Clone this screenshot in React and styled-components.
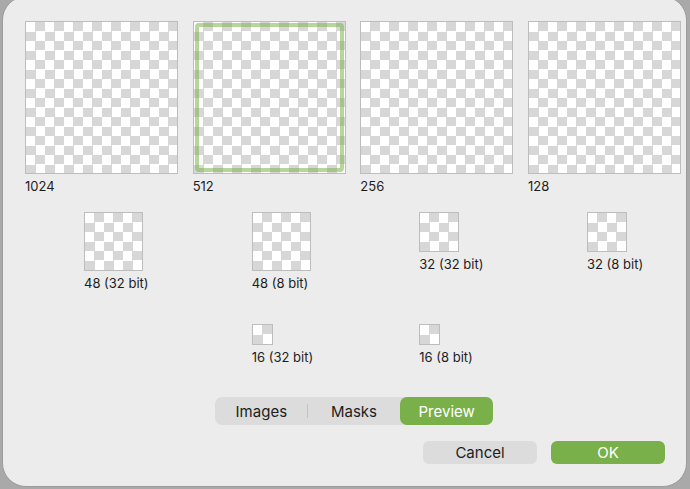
import React from 'react';
import styled, { createGlobalStyle } from 'styled-components';

const GlobalStyle = createGlobalStyle`
  html, body {
    margin: 0;
    padding: 0;
    background: #a9a9a9;
    overflow: hidden;
  }
  body {
    font-family: Inter, "Liberation Sans", sans-serif;
    -webkit-font-smoothing: antialiased;
  }
`;

const Backdrop = styled.div`
  width: 690px;
  height: 489px;
  padding: 0 3px 2px 2px;
  box-sizing: border-box;
  overflow: hidden;
`;

const Dialog = styled.div`
  margin-top: -4px;
  height: 491px;
  box-sizing: border-box;
  background: #ececec;
  border: 1px solid #9c9c9c;
  border-radius: 24px;
  padding: 24px 0 0 22px;
  display: flex;
  flex-direction: column;
`;

const IconGrid = styled.div`
  width: 656px;
  margin-top: ${({ $top }) => $top || 0}px;
  display: grid;
  grid-template-columns: repeat(4, 153px);
  justify-content: space-between;
`;

const Cell = styled.div`
  display: flex;
  flex-direction: column;
  align-items: flex-start;
  padding-left: ${({ $indent }) => $indent || 0}px;
`;

const Thumb = styled.div`
  position: relative;
  width: ${({ $size }) => $size}px;
  height: ${({ $size }) => $size}px;
  box-sizing: border-box;
  border: 1px solid #bdbdbd;
  background-color: #fff;
  background-image: conic-gradient(#d7d7d7 25%, #ffffff 0 50%, #d7d7d7 0 75%, #ffffff 0);
  background-size: 19px 19px;
`;

const Selection = styled.div`
  position: absolute;
  inset: 1px;
  border: 4px solid rgba(122, 181, 74, 0.55);
  border-radius: 4px;
`;

const Label = styled.div`
  margin-top: 4px;
  font-size: 13px;
  line-height: 16px;
  color: #1d1d1d;
  white-space: nowrap;
`;

const Spacer = styled.div``;

const Segmented = styled.div`
  align-self: flex-start;
  margin: 32px 0 0 190px;
  width: 278px;
  height: 28px;
  background: #dcdcdc;
  border-radius: 7px;
  display: grid;
  grid-template-columns: 1fr 1fr 1fr;
  align-items: stretch;
`;

const Segment = styled.div`
  position: relative;
  display: flex;
  align-items: center;
  justify-content: center;
  border-radius: 7px;
  font-size: 15px;
  color: ${({ $active }) => ($active ? '#fff' : '#1d1d1d')};
  background: ${({ $active }) => ($active ? '#79b049' : 'transparent')};
`;

const Divider = styled.span`
  position: absolute;
  right: 0;
  top: 7px;
  bottom: 7px;
  width: 1px;
  background: #c3c3c3;
`;

const Footer = styled.div`
  display: flex;
  gap: 14px;
  margin: 16px 0 0 398px;
`;

const Button = styled.button`
  width: 114px;
  height: 23px;
  border: none;
  border-radius: 6px;
  padding: 0;
  font-family: inherit;
  font-size: 15px;
  color: ${({ $primary }) => ($primary ? '#fff' : '#1d1d1d')};
  background: ${({ $primary }) => ($primary ? '#79b049' : '#dcdcdc')};
`;

const big = [
  { label: '1024' },
  { label: '512', selected: true },
  { label: '256' },
  { label: '128' },
];

const mid = [
  { label: '48 (32 bit)', size: 59 },
  { label: '48 (8 bit)', size: 59 },
  { label: '32 (32 bit)', size: 40 },
  { label: '32 (8 bit)', size: 40 },
];

const small = [
  null,
  { label: '16 (32 bit)', size: 21 },
  { label: '16 (8 bit)', size: 21 },
  null,
];

const App = () => (
  <>
    <GlobalStyle />
    <Backdrop>
      <Dialog>
        <IconGrid>
          {big.map((item) => (
            <Cell key={item.label}>
              <Thumb $size={153}>{item.selected && <Selection />}</Thumb>
              <Label>{item.label}</Label>
            </Cell>
          ))}
        </IconGrid>
        <IconGrid $top={18}>
          {mid.map((item) => (
            <Cell key={item.label} $indent={59}>
              <Thumb $size={item.size} />
              <Label>{item.label}</Label>
            </Cell>
          ))}
        </IconGrid>
        <IconGrid $top={33}>
          {small.map((item, i) =>
            item ? (
              <Cell key={item.label} $indent={59}>
                <Thumb $size={item.size} />
                <Label>{item.label}</Label>
              </Cell>
            ) : (
              <Spacer key={i} />
            )
          )}
        </IconGrid>
        <Segmented>
          <Segment>
            Images
            <Divider />
          </Segment>
          <Segment>Masks</Segment>
          <Segment $active>Preview</Segment>
        </Segmented>
        <Footer>
          <Button>Cancel</Button>
          <Button $primary>OK</Button>
        </Footer>
      </Dialog>
    </Backdrop>
  </>
);

export default App;
